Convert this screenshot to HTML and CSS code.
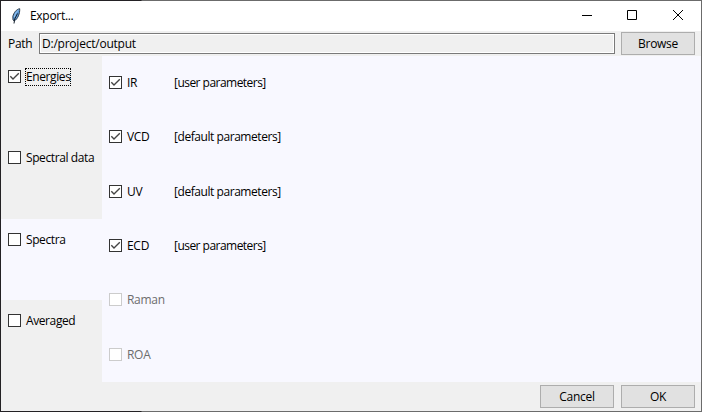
FILE: index.html
```html
<!DOCTYPE html>
<html lang="en">
<head>
<meta charset="utf-8">
<title>Export...</title>
<link rel="stylesheet" href="styles.css">
</head>
<body>
<svg class="defs" width="0" height="0"><symbol id="check" viewBox="0 0 11 11"><path d="M1.3 5.2 4 8 9.8 2.3" fill="none" stroke="#444" stroke-width="1.35"/></symbol></svg>
<div class="window">
  <header class="titlebar">
    <svg class="feather" width="10" height="18" viewBox="0 0 10 18"><path d="M8.7 1.7C5.5 2.2 2.8 5.5 1.8 9.5L2 13 3.2 14C6.8 12 9 6.5 8.7 1.7Z" fill="#5b98d6" stroke="#27333f" stroke-width=".9"/><path d="M7.5 3C5.4 4.7 4 7 3.4 10" fill="none" stroke="#9cc8ef" stroke-width="1"/><path d="M6.5 6.5 3.7 12 3 16.5" fill="none" stroke="#15202c" stroke-width="1"/></svg>
    <span class="title">Export...</span>
    <svg class="controls" width="119" height="30" viewBox="0 0 119 30" fill="none" stroke="#000"><path d="M0 14.5H10M45.5 9.5H54.5V18.5H45.5Z"/><path d="M91 9 101 19M101 9 91 19"/></svg>
  </header>
  <div class="pathbar">
    <label class="path-label">Path</label>
    <div class="entry"><span>D:/project/output</span></div>
    <button class="button">Browse</button>
  </div>
  <main class="body">
    <nav class="tabs">
      <div class="tab"><i class="box"><svg><use href="#check"/></svg></i><span class="text focus">Energies</span></div>
      <div class="tab"><i class="box"></i><span class="text">Spectral data</span></div>
      <div class="tab active"><i class="box"></i><span class="text">Spectra</span></div>
      <div class="tab"><i class="box"></i><span class="text">Averaged</span></div>
    </nav>
    <section class="options">
      <div class="option"><i class="box"><svg><use href="#check"/></svg></i><span class="name">IR</span><span class="params user">[user parameters]</span></div>
      <div class="option"><i class="box"><svg><use href="#check"/></svg></i><span class="name">VCD</span><span class="params">[default parameters]</span></div>
      <div class="option"><i class="box"><svg><use href="#check"/></svg></i><span class="name">UV</span><span class="params">[default parameters]</span></div>
      <div class="option"><i class="box"><svg><use href="#check"/></svg></i><span class="name">ECD</span><span class="params user">[user parameters]</span></div>
      <div class="option disabled"><i class="box"></i><span class="name">Raman</span></div>
      <div class="option disabled"><i class="box"></i><span class="name">ROA</span></div>
    </section>
  </main>
  <footer class="actions">
    <button class="button">Cancel</button>
    <button class="button">OK</button>
  </footer>
</div>
</body>
</html>
```

FILE: styles.css
```css
* { box-sizing: border-box; }
body {
  margin: 0;
  width: 702px;
  height: 412px;
  overflow: hidden;
  padding: 1px;
  background: linear-gradient(90deg, #232124 141px, #6b6b6b 142px);
  font: 12px/16px "Open Sans", "Noto Sans", sans-serif;
  letter-spacing: -0.3px;
  color: #000;
}
.defs { display: block; }
.window { width: 700px; height: 410px; background: #f0f0f0; }
.titlebar { height: 30px; background: #fff; display: flex; align-items: center; padding-left: 10px; }
.title { margin-left: 9px; }
.controls { margin-left: auto; }
.pathbar { height: 25px; display: flex; align-items: center; padding: 0 6px 0 7px; }
.path-label { width: 31px; }
.entry {
  width: 576px;
  height: 21px;
  margin-right: 6px;
  border: 1px solid #7a7a7a;
  box-shadow: inset 0 0 0 1px #fff;
  padding: 2px;
  line-height: 15px;
  letter-spacing: -0.23px;
}
.button {
  width: 74px;
  height: 23px;
  padding: 0;
  border: 1px solid #adadad;
  background: #e1e1e1;
  font: inherit;
  letter-spacing: inherit;
  color: inherit;
}
.body { height: 326px; display: grid; grid-template-columns: 101px 599px; }
.tabs { display: grid; grid-template-rows: 81px 82px 81px 82px; }
.tab { display: flex; align-items: flex-start; padding: 14px 0 0 7px; }
.tab.active { background: #f8f8ff; }
.text { margin: -1px 0 0 5px; white-space: nowrap; letter-spacing: -0.4px; }
.focus { outline: 1px dotted #000; }
.box {
  flex: none;
  width: 13px;
  height: 13px;
  border: 1px solid #333;
  background: #fff;
}
.box svg { display: block; width: 11px; height: 11px; }
.options { background: #f8f8ff; display: grid; grid-template-rows: 54px 55px 54px 54px 55px 54px; }
.option { display: flex; align-items: flex-start; padding: 20px 0 0 7px; }
.name { width: 47px; margin: -1px 0 0 5px; }
.params { margin-top: -1px; letter-spacing: -0.44px; }
.params.user { letter-spacing: -0.53px; }
.disabled { color: #6d6d6d; }
.disabled .box { border-color: #ccc; }
.actions { height: 29px; display: flex; justify-content: flex-end; gap: 7px; padding: 3px 6px 0 0; }
```
